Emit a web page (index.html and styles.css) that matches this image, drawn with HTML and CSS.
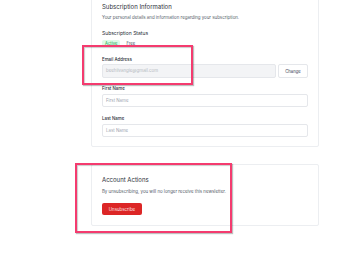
FILE: index.html
```html
<!DOCTYPE html>
<html>
<head>
<meta charset="utf-8">
<link rel="stylesheet" href="styles.css">
</head>
<body>
<main class="main">
  <section class="card card-info">
    <h2 class="title">Subscription Information</h2>
    <p class="desc">Your personal details and information regarding your subscription.</p>
    <h3 class="subtitle">Subscription Status</h3>
    <div class="badges">
      <span class="badge badge-active">Active</span>
      <span class="badge badge-plain">Free</span>
    </div>
    <div class="field field-email">
      <label class="label">Email Address</label>
      <div class="email-row">
        <div class="input input-disabled">beehiivangie@gmail.com</div>
        <button class="btn-change">Change</button>
      </div>
    </div>
    <div class="field field-first">
      <label class="label">First Name</label>
      <div class="input input-empty">First Name</div>
    </div>
    <div class="field field-last">
      <label class="label">Last Name</label>
      <div class="input input-empty">Last Name</div>
    </div>
  </section>
  <section class="card card-actions">
    <h2 class="title">Account Actions</h2>
    <p class="desc">By unsubscribing, you will no longer receive this newsletter.</p>
    <button class="btn-unsub">Unsubscribe</button>
  </section>
</main>
<div class="highlight highlight-email"></div>
<div class="highlight highlight-actions"></div>
</body>
</html>
```
FILE: styles.css
```css
* { box-sizing: border-box; }
html, body { margin: 0; padding: 0; background: #ffffff; }
body {
  width: 348px;
  height: 268px;
  overflow: hidden;
  position: relative;
  font-family: Inter, "Liberation Sans", sans-serif;
  color: #111827;
}
.main {
  display: flex;
  flex-direction: column;
  gap: 17px;
  padding-left: 91px;
  width: 319px;
  margin-top: -8px;
}
.card {
  border: 1px solid #eceef1;
  border-radius: 2px;
  background: #fff;
  padding: 10px 10px 9px 10px;
  display: flex;
  flex-direction: column;
}
.title {
  margin: 0;
  font-size: 6px;
  line-height: 8px;
  font-weight: 400;
  color: #2a2f38;
}
.desc {
  margin: 4px 0 0;
  font-size: 4.4px;
  line-height: 6px;
  color: #555c68;
}
.subtitle {
  margin: 9px 0 0;
  font-size: 5px;
  line-height: 7px;
  font-weight: 400;
  color: #2a2f38;
}
.badges {
  display: flex;
  gap: 6px;
  margin-top: 3px;
  align-items: center;
}
.badge {
  font-size: 4.2px;
  line-height: 7px;
  height: 7px;
}
.badge-active {
  background: #dcfce7;
  color: #16a34a;
  padding: 0 3px;
  border-radius: 2px;
}
.badge-plain { color: #374151; }
.field { display: flex; flex-direction: column; gap: 1.5px; }
.field-email { margin-top: 10px; gap: 1px; }
.field-first { margin-top: 8px; }
.field-last { margin-top: 9px; }
.label {
  font-size: 4.4px;
  line-height: 6px;
  font-weight: 500;
  color: #2a2f38;
}
.email-row { display: flex; gap: 2px; }
.input {
  height: 13.5px;
  border: 1px solid #e5e7eb;
  border-radius: 2px;
  font-size: 4.4px;
  line-height: 11.5px;
  padding: 0 3px;
  color: #9ca3af;
  flex: 1;
}
.input-disabled { background: #f3f4f6; color: #b4b9c1; height: 14px; line-height: 12px; }
.input-empty { background: #fff; }
.btn-change {
  width: 30px;
  height: 14px;
  border: 1px solid #e5e7eb;
  border-radius: 2px;
  background: #fff;
  font-family: inherit;
  font-size: 4.2px;
  color: #374151;
  padding: 0;
}
.card-actions { padding: 11px 10px 10px; }
.card-actions .desc { margin-top: 5px; }
.btn-unsub {
  margin-top: 8px;
  width: 40px;
  height: 12px;
  border: none;
  border-radius: 2px;
  background: #dc2626;
  color: #fde8e8;
  font-family: inherit;
  font-size: 4.4px;
  padding: 0;
}
.highlight {
  position: absolute;
  border: 2px solid #f43b6f;
  box-shadow: 1px 1px 1px rgba(0,0,0,0.25), inset 1px 1px 1px rgba(0,0,0,0.2);
}
.highlight-email { left: 82px; top: 45px; width: 111px; height: 40px; }
.highlight-actions { left: 75px; top: 163px; width: 157px; height: 70px; }
```
